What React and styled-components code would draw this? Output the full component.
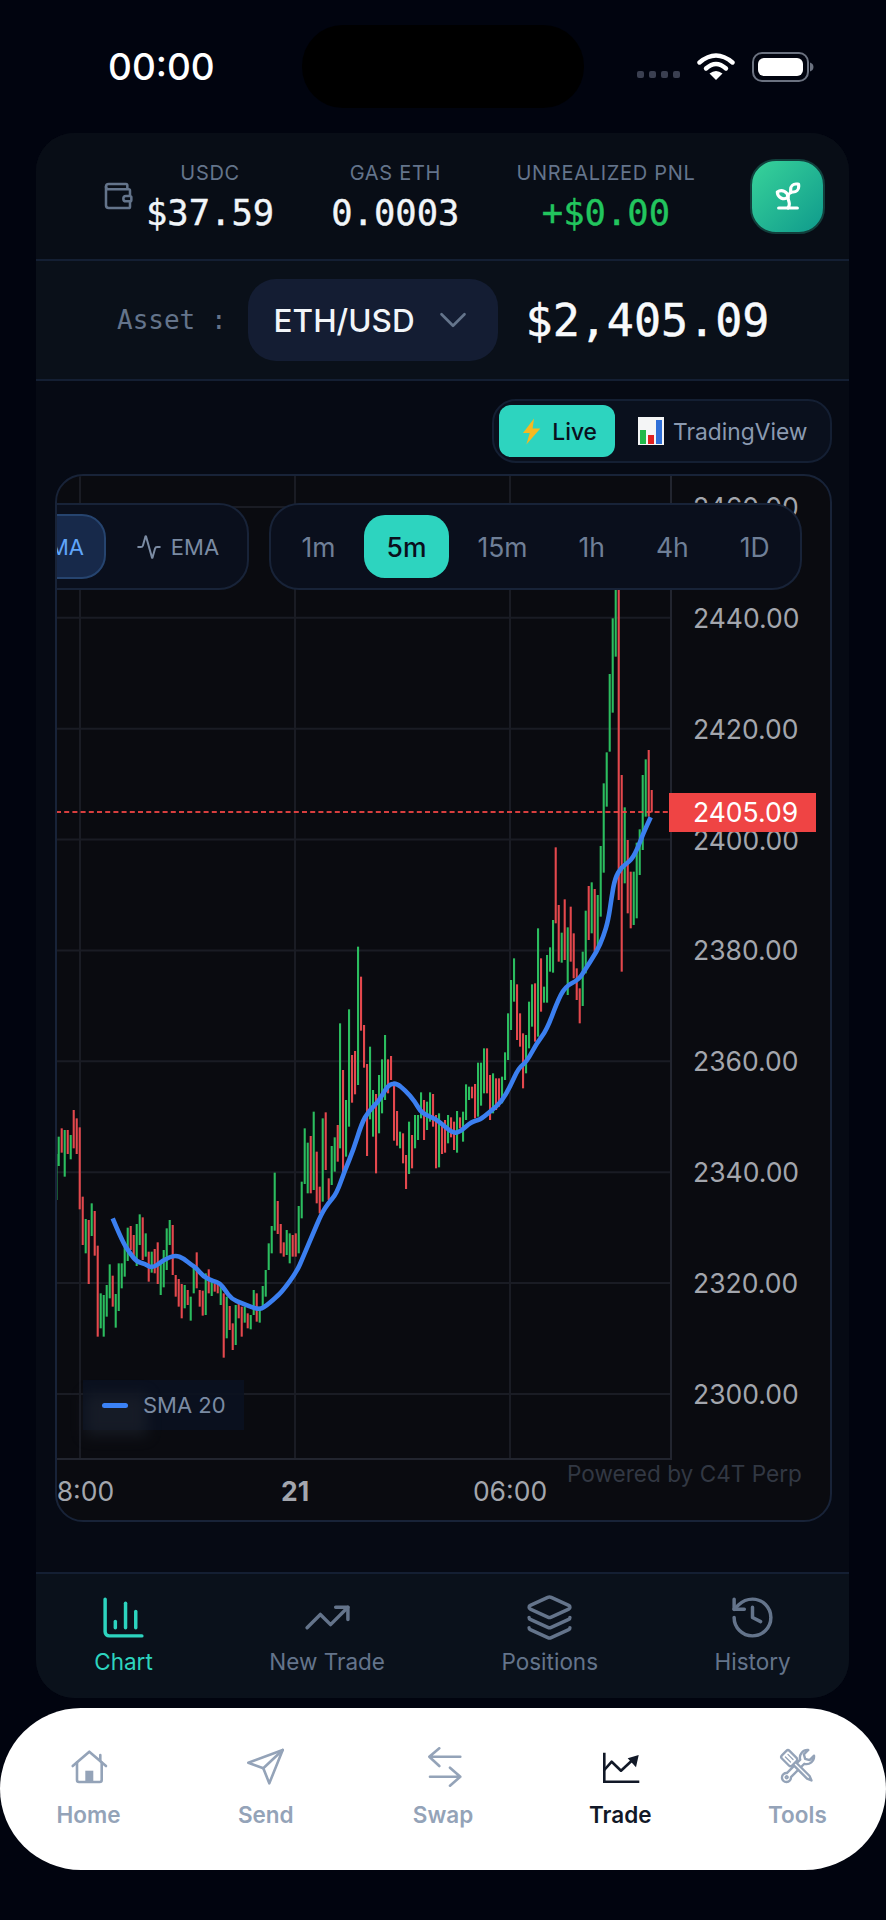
import React from "react";
import styled, { createGlobalStyle } from "styled-components";
import { Wallet, Sprout, ChevronDown, Activity, ChartColumn, TrendingUp, Layers, History } from "lucide-react";

const Global = createGlobalStyle`
  html, body { margin: 0; padding: 0; background: #01040f; }
  body { font-family: Inter, "Liberation Sans", sans-serif; }
  * { box-sizing: border-box; }
`;

const MONO = `"DejaVu Sans Mono", "Liberation Mono", monospace`;

const Screen = styled.div`
  width: 886px; height: 1920px; background: #01040f; display: flex; flex-direction: column; overflow: hidden;
`;
const StatusBar = styled.div`
  height: 133px; flex: none; display: grid; grid-template-columns: 302px 282px 1fr; align-items: center;
`;
const Clock = styled.div`
  padding-left: 108px; color: #fff; font-size: 37px; font-weight: 500; line-height: 1;
`;
const Island = styled.div`
  height: 83px; border-radius: 41px; background: #000;
`;
const StatusIcons = styled.div`
  display: flex; align-items: center; justify-content: flex-end; padding-right: 83px; gap: 0;
`;
const Panel = styled.div`
  width: 813px; height: 1565px; margin-left: 36px; flex: none; border-radius: 38px; overflow: hidden;
  display: flex; flex-direction: column; background: #0a0f18;
`;
const Header = styled.div`
  height: 128px; flex: none; display: flex; align-items: center; padding-left: 66px; gap: 57px;
  background: #080d16; border-bottom: 2px solid #141f33;
`;
const WalletGroup = styled.div`
  display: flex; align-items: center; gap: 12px; color: #64748b;
`;
const Stat = styled.div`
  display: flex; flex-direction: column; align-items: center; gap: 8px; padding-top: 2px;
`;
const StatLabel = styled.div`
  color: #64748b; font-size: 20px; line-height: 24px; letter-spacing: 0.7px; white-space: nowrap;
`;
const StatValue = styled.div`
  color: ${(p) => p.$color || "#f1f5f9"}; font-family: ${MONO}; font-size: 35.5px; line-height: 40px; white-space: nowrap;
  -webkit-text-stroke: 0.4px currentColor;
`;
const EarnButton = styled.button`
  width: 75px; height: 75px; flex: none; margin-left: -2px; padding: 0; border-radius: 26px; border: 2px solid #123f3c;
  background: linear-gradient(135deg, #38d39a, #0f9a8c); color: #fff; display: flex; align-items: center; justify-content: center;
`;
const AssetRow = styled.div`
  height: 120px; flex: none; display: flex; align-items: center; padding-left: 81px; gap: 21px;
  background: #0a1019; border-bottom: 2px solid #141f33;
`;
const AssetLabel = styled.div`
  color: #64748b; font-family: ${MONO}; font-size: 26px; white-space: pre;
`;
const AssetSelect = styled.div`
  width: 250px; height: 82px; border-radius: 28px; background: #141d33; color: #f1f5f9; display: flex; align-items: center;
  justify-content: space-between; padding: 0 22px 0 26px; font-size: 31.5px; font-weight: 500;
`;
const Price = styled.div`
  margin-left: 7px; color: #f8fafc; font-family: ${MONO}; font-size: 45px; font-weight: 400; letter-spacing: 0; white-space: nowrap;
  -webkit-text-stroke: 0.5px currentColor;
`;
const Main = styled.div`
  flex: 1; min-height: 0; display: flex; flex-direction: column; background: #060a14; padding: 18px 17px 0 19px;
`;
const ModeToggle = styled.div`
  align-self: flex-end; width: 340px; height: 64px; border-radius: 24px; border: 2px solid #141f33; background: #0a101d;
  display: flex; align-items: center; padding: 0 5px; gap: 0;
`;
const ModeButton = styled.div`
  height: 52px; border-radius: 12px; display: flex; align-items: center; gap: ${(p) => (p.$active ? "11px" : "9px")};
  padding: 0 ${(p) => (p.$active ? "18px 0 23px" : "0 0 23px")}; font-size: 22.8px; font-weight: ${(p) => (p.$active ? 500 : 400)};
  background: ${(p) => (p.$active ? "#2dd4bf" : "transparent")}; color: ${(p) => (p.$active ? "#0a0f1c" : "#8b9ab0")};
  width: ${(p) => (p.$active ? "116px" : "auto")};
`;
const ChartCard = styled.div`
  position: relative; margin-top: 11px; height: 1048px; border: 2px solid #182338; border-radius: 28px; overflow: hidden; background: #0a0b10;
`;
const ChartSvg = styled.svg`
  display: block;
`;
const Overlay = styled.div`
  position: absolute; top: 27px; left: -111px; display: flex; align-items: center; gap: 20px;
`;
const Pill = styled.div`
  height: 87px; border: 2px solid #182338; border-radius: 30px; background: #0a0f1c; display: flex; align-items: center;
  padding: 0 ${(p) => p.$pad}px; gap: ${(p) => p.$gap}px;
`;
const LineButton = styled.div`
  height: 65px; display: flex; align-items: center; justify-content: ${(p) => (p.$active ? "flex-end" : "center")}; gap: 9px; font-size: 22px;
  width: ${(p) => (p.$active ? "150px" : "123px")}; padding-right: ${(p) => (p.$active ? "20px" : "0")}; border-radius: 24px;
  color: ${(p) => (p.$active ? "#60a5fa" : "#7b8ba3")}; background: ${(p) => (p.$active ? "#17294a" : "transparent")};
  border: ${(p) => (p.$active ? "2px solid #26446f" : "none")};
`;
const FrameButton = styled.div`
  height: 63px; display: flex; align-items: center; padding: 0 22.5px; border-radius: 21px; font-size: 26.5px; font-weight: ${(p) => (p.$active ? 500 : 400)};
  color: ${(p) => (p.$active ? "#0a0f1c" : "#6f7f97")}; background: ${(p) => (p.$active ? "#2dd4bf" : "transparent")};
`;
const Legend = styled.div`
  position: absolute; left: 26px; top: 904px; width: 161px; height: 50px; background: rgba(11, 17, 32, 0.92);
  display: flex; align-items: center; gap: 15px; padding-left: 19px; color: #7b8ba3; font-size: 22px;
  &::before {
    content: ""; position: absolute; left: 2px; top: 14px; width: 62px; height: 42px; background: #1b202a; filter: blur(7px); opacity: 0.7;
  }
`;
const LegendSwatch = styled.span`
  position: relative; width: 26px; height: 5px; border-radius: 3px; background: #3b82f6;
`;
const LegendText = styled.span`
  position: relative;
`;
const Nav = styled.div`
  height: 126px; flex: none; border-top: 2px solid #141f33; background: #0a111b; display: flex; justify-content: space-around; padding-top: 19px;
`;
const NavItem = styled.div`
  display: flex; flex-direction: column; align-items: center; gap: 6px; color: ${(p) => (p.$active ? "#2dd4bf" : "#64748b")};
`;
const NavLabel = styled.div`
  font-size: 22.5px; line-height: 28px; white-space: nowrap;
`;
const TabBar = styled.div`
  margin-top: 10px; height: 162px; flex: none; border-radius: 81px; background: #fff; display: grid; grid-template-columns: repeat(5, 1fr); padding-top: 39px;
`;
const Tab = styled.div`
  display: flex; flex-direction: column; align-items: center; gap: 14px; color: ${(p) => (p.$active ? "#111827" : "#94a3b8")};
`;
const TabLabel = styled.div`
  font-size: 22.5px; font-weight: 600; line-height: 28px;
`;

function parse(table, x0, y0) {
  return table.trim().split(/\s+/).map((s) => {
    const m = s.match(/^(-?\d+)([gr])(-?\d+)-(\d+)$/);
    return { x: x0 + +m[1] / 3, top: y0 + +m[3] / 3, bottom: y0 + +m[4] / 3, c: m[2] };
  });
}

const tableA = `19g222-360 26g170-258 35r145-218 44g150-290 53r150-222 62g165-238 71r90-205 80r115-222 89r142-388 98r350-495
107g417-520 116r420-612 125g370-468 134r393-527 143r497-770 152g640-745 161g645-770 170g615-710 179g553-655 188r587-680
197g642-743 206g550-693 215g550-625 224g500-590 233g443-543 242r438-510 251r465-540 260g432-558 269g403-495 278r412-540
287g460-530 296r515-605 305g515-578 314r507-580 323r487-612 332g550-645 341g510-622 350g445-570 359g420-495 368r435-585
377r585-650 386r597-680 395r612-715 404g615-685 413r630-675 422g650-722 431g560-640 440r517-625 449r630-680 458r632-707
467g580-705 476r568-640 485g605-648 494r610-635 503r612-640 512g620-675 521r640-833 530g650-775 539r678-750 548r730-810
557g675-795 566r672-715 575r680-770 584g680-728 593r700-745 602g705-748 611g630-705 620r640-725 629g680-728 638g618-680
647g570-650 656g490-570 665g438-520 674g278-452 683r363-462 692r432-520 701r487-530 710g450-525 719g460-550 728r465-530
737r460-530 746g378-520 755g305-415 764g145-312 773g188-340 782r168-340 791g95-330 800r215-370 809r320-400 818g115-365
827r97-270 836r295-360 845g198-315 854g172-275 863r135-245`;

const tableB = `120g310-685 129r450-760 138g540-710 147g268-620 156r405-548 165r393-523 174g80-495 183r170-332 192r315-443 201r432-708
210g380-598 219g510-650 228r522-760 237g465-640 246g418-580 255g345-540 264r418-520 273r408-480 282r490-662 291r573-677
300g635-685 309r640-730 318r705-807 327g605-762 336r645-745 345g585-685 354g585-660 363g517-595 372r540-660 381g545-630
390g517-605 399r522-620 408r585-745 417g580-742 426r610-702 435r600-698 444g585-670 453r592-652 462r605-690 471g573-698
480r592-625 489g575-665 498g493-600 507g500-540 516r500-535 525r492-595 534g428-590 543g428-557 552g385-520 561r385-520
570r465-600 579g460-580 588r475-570 597r475-560 606g470-550 615g397-480 624g280-420 633g180-330 642g115-245 651r193-360
660r280-380 669r340-505 678g345-460 687g245-385 696g193-320 705r190-365 714g25-350 723r115-275 732g200-248 741g105-248
750g82-155 759g0-158`;

const tableC = `167r862-1090 176r1035-1205 185g1118-1208 194r1018-1200 203g1102-1305 212r1040-1205 221r1120-1255 230r1225-1320
239r1285-1390 248g1175-1338 257g1052-1240 266r978-1140 275g967-1120 284r987-1175 293g1005-1170 302g858-1070 311g670-938
320g577-740 329g342-575 338g175-458 347g0-290 356r0-1020 365r645-1235 374g742-970 383r840-1060 392r935-1105 401g935-1095
410g848-1075 419g808-945 428g645-870 437g598-770 446r570-770 455r690-757`;

const bars = [...parse(tableA, 50, 1080), ...parse(tableB, 300, 920), ...parse(tableC, 500, 560)];

const z = (pts, x0, y0) => pts.map(([a, b]) => [x0 + a / 3, y0 + b / 3]);
const maPts = [
  ...z([[188,415],[215,480],[240,520],[260,545],[285,552],[308,565],[340,540],[375,525],[400,535],[425,555],[440,565],[460,590],[490,603],[510,610],[525,630],[545,657],[575,670],[620,687],[640,685],[680,650],[700,630],[740,575],[760,530],[785,470],[815,400],[835,370],[860,340],[885,270],[910,210],[935,130]], 50, 1080),
  ...z([[205,575],[235,545],[255,510],[270,492],[290,490],[315,510],[345,545],[365,580],[405,595],[435,620],[460,640],[480,635],[515,605],[540,600],[570,575],[605,545],[630,500],[655,445],[680,425],[710,370],[740,330],[770,250],[795,200],[835,180],[855,150],[890,95],[910,50],[925,0]], 300, 920),
  ...z([[335,1010],[345,955],[365,920],[395,900],[415,860],[430,820],[452,772]], 500, 560),
];
function smooth(p) {
  let d = `M${p[0][0].toFixed(1)} ${p[0][1].toFixed(1)}`;
  for (let i = 1; i < p.length - 1; i++) {
    const mx = (p[i][0] + p[i + 1][0]) / 2, my = (p[i][1] + p[i + 1][1]) / 2;
    d += ` Q${p[i][0].toFixed(1)} ${p[i][1].toFixed(1)} ${mx.toFixed(1)} ${my.toFixed(1)}`;
  }
  const l = p[p.length - 1];
  return d + ` L${l[0].toFixed(1)} ${l[1].toFixed(1)}`;
}

const prices = ["2460.00", "2440.00", "2420.00", "2400.00", "2380.00", "2360.00", "2340.00", "2320.00", "2300.00"];
const GRID = "#1a1c24";
const AXIS = { fontFamily: "Inter, sans-serif", fontSize: 26.5, fill: "#a3a6ad" };

function Chart() {
  return (
    <ChartSvg width="773" height="1044" viewBox="57 476 773 1044">
      {prices.map((_, i) => (
        <line key={i} x1="56" x2="671" y1={507 + i * 110.86} y2={507 + i * 110.86} stroke={GRID} strokeWidth="2" />
      ))}
      {[80, 295, 510].map((x) => (
        <line key={x} x1={x} x2={x} y1="476" y2="1459" stroke={GRID} strokeWidth="2" />
      ))}
      <line x1="671" x2="671" y1="476" y2="1460" stroke="#22252f" strokeWidth="2" />
      <line x1="56" x2="672" y1="1459" y2="1459" stroke="#22252f" strokeWidth="2" />
      {bars.map((b, i) => (
        <rect key={i} x={b.x - 1} y={b.top} width="2.1" height={b.bottom - b.top} fill={b.c === "g" ? "#2bbd5f" : "#e4484d"} />
      ))}
      <path d={smooth(maPts)} fill="none" stroke="#3b7ff0" strokeWidth="4.6" strokeLinecap="butt" strokeLinejoin="round" />
      <line x1="56" x2="669" y1="812" y2="812" stroke="#ef4444" strokeWidth="2" strokeDasharray="5 3.2" opacity="0.9" />
      {prices.map((p, i) => (
        <text key={p} x="693" y={507 + i * 110.86} dominantBaseline="central" {...AXIS}>{p}</text>
      ))}
      <rect x="669" y="793" width="147" height="39" fill="#ef4444" />
      <text x="693" y="812" dominantBaseline="central" {...AXIS} fill="#fff">2405.09</text>
      <text x="80" y="1491" textAnchor="middle" dominantBaseline="central" {...AXIS}>18:00</text>
      <text x="295" y="1491" textAnchor="middle" dominantBaseline="central" {...AXIS} fontWeight="700">21</text>
      <text x="510" y="1491" textAnchor="middle" dominantBaseline="central" {...AXIS}>06:00</text>
      <text x="567" y="1473" dominantBaseline="central" fontFamily="Inter, sans-serif" fontSize="22.6" fill="#323843">Powered by C4T Perp</text>
    </ChartSvg>
  );
}

const IconSvg = ({ children }) => (
  <svg width="40" height="40" viewBox="0 0 40 40" fill="none" stroke="currentColor" strokeWidth="2.6" strokeLinecap="round" strokeLinejoin="round">
    {children}
  </svg>
);

const HomeIcon = () => (
  <IconSvg>
    <path d="M3.7 19 20.3 4.7 37 19" />
    <path d="M8 15.500V33a2 2 0 0 0 2 2h20.700a2 2 0 0 0 2-2V15.500" />
    <path d="M31.300 8v6" />
    <rect x="16.300" y="23.700" width="8" height="11.300" fill="currentColor" stroke="none" />
  </IconSvg>
);
const SendIcon = () => (
  <IconSvg>
    <path d="M36.700 3 2.300 15.700l15 5.600 6 15z" />
    <path d="M17.300 21.300 36.700 3" />
  </IconSvg>
);
const SwapIcon = () => (
  <IconSvg>
    <path d="M37.300 9.700H6.300M16.300 1.300l-10 8.400 10 9.300" />
    <path d="M7 29.700h30.300M27 20.700l10.300 9-10.300 9" />
  </IconSvg>
);
const TradeIcon = () => (
  <IconSvg>
    <path d="M4.300 5.700v29h35" strokeLinecap="butt" strokeLinejoin="miter" />
    <path d="M4.300 23l7.400-8.300L21 23.700l10.700-10" />
    <path d="M38.700 8 27.700 11.300 36 20.300z" fill="currentColor" stroke="none" />
  </IconSvg>
);
const ToolsIcon = () => (
  <IconSvg>
    <g transform="translate(20.500 19.500) scale(0.9) rotate(45)" strokeWidth="2.6" fill="#fff">
      <path d="M-3.200 -7.500V13.500A5 5 0 1 0 3.200 13.500V-7.500A8.500 8.500 0 0 0 4.500 -21.500V-14.500L0 -12L-4.500 -14.500V-21.500A8.500 8.500 0 0 0 -3.200 -7.500Z" />
      <circle cx="0" cy="17" r="1" />
    </g>
    <g transform="translate(20.500 19.500) scale(0.9) rotate(-45)" strokeWidth="2.6" fill="#fff">
      <path d="M-2 -5V17L0 22L2 17V-5" />
      <rect x="-6" y="-21" width="12" height="16" rx="2.500" />
      <path d="M-2 -17V-9M2 -17V-9" strokeWidth="1.400" />
    </g>
  </IconSvg>
);

const WifiIcon = () => (
  <svg width="38" height="28" viewBox="0 0 38 28" fill="none" stroke="#fff" strokeWidth="4.400" strokeLinecap="round" style={{ marginRight: 17, marginTop: -1 }}>
    <path d="M2.500 10.500Q19-3.500 35.500 10.500" />
    <path d="M9 16.500Q19 7.500 29 16.500" />
    <path d="M12.500 21.500Q19 16.500 25.500 21.500L19 28Z" fill="#fff" stroke="none" />
  </svg>
);
const SignalDots = () => (
  <svg width="43" height="7" viewBox="0 0 43 7" fill="#3a3f50" style={{ marginRight: 17, marginTop: 15 }}>
    {[0, 12, 24, 36].map((x) => <rect key={x} x={x} width="7" height="7" rx="2" />)}
  </svg>
);
const BatteryIcon = () => (
  <svg width="62" height="30" viewBox="0 0 62 30" style={{ marginRight: -11 }}>
    <rect x="1" y="1" width="55" height="28" rx="9" fill="none" stroke="#6b7280" strokeWidth="2" />
    <rect x="6" y="6" width="45" height="18" rx="6" fill="#fff" />
    <path d="M58 10.500c2 .6 3.500 2.200 3.500 4.500s-1.500 3.900-3.500 4.500z" fill="#6b7280" />
  </svg>
);
const BoltEmoji = () => (
  <svg width="20" height="27" viewBox="0 0 20 27">
    <path d="M12.500 0 1 15h7L4.500 27 19 10.500h-8z" fill="#f5b921" />
  </svg>
);
const BarsEmoji = () => (
  <svg width="26" height="28" viewBox="0 0 26 28">
    <rect width="26" height="28" fill="#f4f5f6" />
    <rect x="2" y="13" width="6" height="14" fill="#22b84a" />
    <rect x="10" y="18" width="6" height="9" fill="#e02020" />
    <rect x="18" y="3" width="6" height="24" fill="#2f6fd8" />
  </svg>
);

export default function App() {
  return (
    <>
      <Global />
      <Screen>
        <StatusBar>
          <Clock>00:00</Clock>
          <Island />
          <StatusIcons>
            <SignalDots />
            <WifiIcon />
            <BatteryIcon />
          </StatusIcons>
        </StatusBar>
        <Panel>
          <Header>
            <WalletGroup>
              <Wallet size={32} strokeWidth={1.9} />
              <Stat>
                <StatLabel>USDC</StatLabel>
                <StatValue>$37.59</StatValue>
              </Stat>
            </WalletGroup>
            <Stat>
              <StatLabel>GAS ETH</StatLabel>
              <StatValue>0.0003</StatValue>
            </Stat>
            <Stat>
              <StatLabel>UNREALIZED PNL</StatLabel>
              <StatValue $color="#22c55e">+$0.00</StatValue>
            </Stat>
            <EarnButton><Sprout size={32} strokeWidth={2.4} /></EarnButton>
          </Header>
          <AssetRow>
            <AssetLabel>Asset :</AssetLabel>
            <AssetSelect>ETH/USD<ChevronDown size={46} strokeWidth={1.4} color="#64748b" /></AssetSelect>
            <Price>$2,405.09</Price>
          </AssetRow>
          <Main>
            <ModeToggle>
              <ModeButton $active><BoltEmoji />Live</ModeButton>
              <ModeButton><BarsEmoji />TradingView</ModeButton>
            </ModeToggle>
            <ChartCard>
              <Chart />
              <Overlay>
                <Pill $pad={8} $gap={10}>
                  <LineButton $active>SMA</LineButton>
                  <LineButton><Activity size={26} strokeWidth={1.8} />EMA</LineButton>
                </Pill>
                <Pill $pad={8} $gap={6}>
                  {["1m", "5m", "15m", "1h", "4h", "1D"].map((t) => (
                    <FrameButton key={t} $active={t === "5m"}>{t}</FrameButton>
                  ))}
                </Pill>
              </Overlay>
              <Legend><LegendSwatch /><LegendText>SMA 20</LegendText></Legend>
            </ChartCard>
          </Main>
          <Nav>
            <NavItem $active><ChartColumn size={49} strokeWidth={1.7} /><NavLabel>Chart</NavLabel></NavItem>
            <NavItem><TrendingUp size={49} strokeWidth={1.7} /><NavLabel>New Trade</NavLabel></NavItem>
            <NavItem><Layers size={49} strokeWidth={1.7} /><NavLabel>Positions</NavLabel></NavItem>
            <NavItem><History size={49} strokeWidth={1.7} /><NavLabel>History</NavLabel></NavItem>
          </Nav>
        </Panel>
        <TabBar>
          <Tab><HomeIcon /><TabLabel>Home</TabLabel></Tab>
          <Tab><SendIcon /><TabLabel>Send</TabLabel></Tab>
          <Tab><SwapIcon /><TabLabel>Swap</TabLabel></Tab>
          <Tab $active><TradeIcon /><TabLabel>Trade</TabLabel></Tab>
          <Tab><ToolsIcon /><TabLabel>Tools</TabLabel></Tab>
        </TabBar>
      </Screen>
    </>
  );
}
